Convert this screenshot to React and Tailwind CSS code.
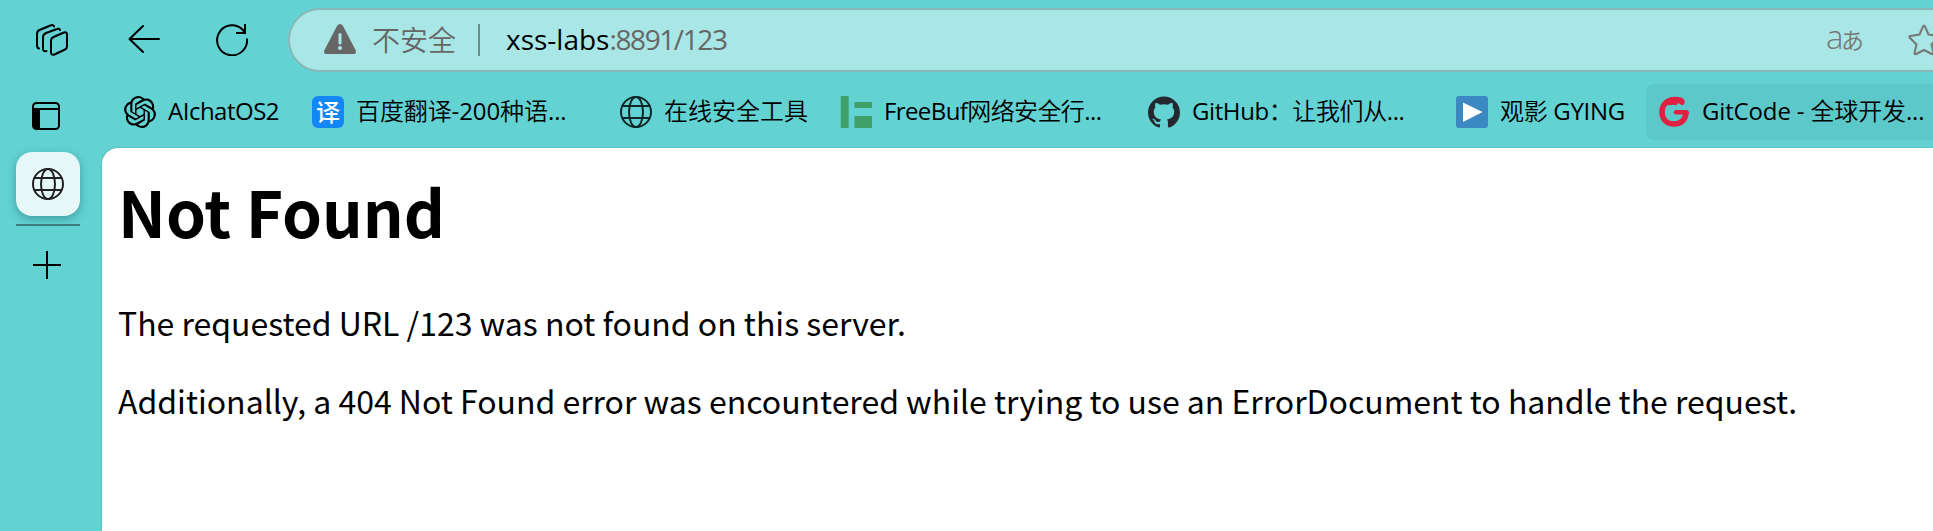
import React from "react";
import { SiOpenai, SiGithub } from "react-icons/si";

const UI = "font-['Open_Sans','Noto_Sans_CJK_SC',sans-serif]";

function Globe({ className }) {
  return (
    <svg className={className} width="32" height="32" viewBox="0 0 32 32" fill="none" stroke="currentColor" strokeWidth="2">
      <circle cx="16" cy="16" r="15" />
      <ellipse cx="16" cy="16" rx="7" ry="15" />
      <path d="M2 10h28M2 22h28" />
    </svg>
  );
}

function FreeBuf() {
  return (
    <svg width="32" height="32" viewBox="0 0 32 32" fill="#40a168">
      <path d="M.7 0h8v32h-8zM14.5 6H32v6H14.5zM14.5 20H32v12H14.5z" />
    </svg>
  );
}

function Play() {
  return (
    <svg width="32" height="32" viewBox="0 0 32 32">
      <rect width="32" height="32" rx="3" fill="#3b88c3" />
      <path d="M7 6.5 26.500 16 7 26z" fill="#fff" />
    </svg>
  );
}

function GitCode() {
  return (
    <svg width="32" height="32" viewBox="0 0 32 32" fill="none" stroke="#e11f41" strokeLinecap="round" strokeLinejoin="round">
      <path d="M23 4.500C13 1.500 4 6 4 16c0 7.500 5 12 12 12 6 0 10.500-3 12-10" strokeWidth="5.500" />
      <path d="M18 16.300H28.500" strokeWidth="4.500" />
      <path d="M6 12 8.300 7 11 9.500Q15 8 18 9.500L20 7l4.500 2.500Q28 7 26 3.500L15 1.500 6 5z" fill="#e11f41" stroke="none" />
    </svg>
  );
}

// Latin runs use the regular weight; Chinese runs keep the lighter inherited one.
function MixedText({ children }) {
  return children.split(/([\x20-\x7e]+)/).map((part, i) =>
    i % 2 ? <span key={i} className="font-normal">{part}</span> : part
  );
}

function Bookmark({ width, icon, label, text, active }) {
  return (
    <div className={`flex h-14 shrink-0 items-center gap-3 rounded-lg pl-3 ${width} ${active ? "bg-[#5dc8ca]" : ""}`}>
      <span className="flex size-8 shrink-0 items-center justify-center">{icon}</span>
      <span className={`whitespace-pre pb-0.5 text-2xl leading-8 ${text}`}><MixedText>{label}</MixedText></span>
    </div>
  );
}

export default function App() {
  return (
    <div className={`flex h-[531px] w-[1933px] flex-col overflow-hidden bg-[#62d2d3] font-[350] text-black ${UI}`}>
      <header className="flex h-20 shrink-0 items-center">
        <div className="flex w-72 shrink-0 items-center pl-9">
          <svg className="mr-[60px]" width="32" height="32" viewBox="0 0 32 32" fill="none" stroke="currentColor" strokeWidth="2" strokeLinejoin="round" strokeLinecap="round">
            <path d="M17.500 13 28 8.500Q31 7.500 31 10.500V22.500Q31 24.500 29 25.500L18.500 30.500Q15 31.500 15 28.500V17Q15 14 17.500 13z" />
            <path d="M24 6Q23.500 4 21 5L10 9Q7 10.500 7 13V25Q7 28 10.500 27" />
            <path d="M18 2.500Q17.500.5 15 1.300L3.500 6Q1 7 1 10V21.500Q1 24 3 24.500" />
          </svg>
          <svg className="mr-14" width="32" height="32" viewBox="0 0 32 32" fill="none" stroke="currentColor" strokeWidth="2" strokeLinecap="round" strokeLinejoin="round">
            <path d="M31 15H1.500M15 2 1.500 15 15 28" />
          </svg>
          <svg width="32" height="32" viewBox="0 0 32 32" fill="none" stroke="currentColor" strokeWidth="2">
            <path d="M31 14.500A15 15 0 1 1 26 5L29 8.500M29 0V9H20" />
          </svg>
        </div>
        <div className="flex h-16 w-[1700px] shrink-0 items-center rounded-full border-2 border-[#8ab8b8] bg-[#a8e7e5] pl-[34px] text-[28px] text-[#666]">
          <svg className="mr-4" width="32" height="32" viewBox="0 0 32 32">
            <path d="M13 2Q16-2 19 2L31.500 26Q33 30 29 30H3Q-1 30 .500 26z" fill="#666" />
            <path d="M16 10.500v8.500" stroke="#a8e7e5" strokeWidth="3" strokeLinecap="round" />
            <circle cx="16" cy="24" r="2" fill="#a8e7e5" />
          </svg>
          <span className="w-[84px] leading-9">不安全</span>
          <span className="ml-[22px] h-8 w-0.5 bg-[#6a8c8b]" />
          <span className="ml-[26px] w-[1320px] whitespace-nowrap pb-0.5 font-normal leading-9"><span className="text-black">xss-labs</span><span className="tracking-[-1.4px]">:8891/123</span></span>
          <span className="flex w-[82px] items-center text-[#777]">
            <span className="w-[15px] pb-1.5 text-[33px] leading-8">a</span>
            <span className="text-[23px] leading-8">あ</span>
          </span>
          <svg width="32" height="32" viewBox="0 0 32 32" fill="none" stroke="#777" strokeWidth="2" strokeLinejoin="round">
            <path d="M15 2.500Q16 .5 17 2.500L20.500 10.500 29.500 12Q31.500 12.500 30 14L23.500 20.500 25.500 29Q25.500 31 23.800 30L16 26 8.200 30Q6.500 31 6.500 29L8.500 20.500 2 14Q.500 12.500 2.500 12L11.500 10.500z" />
          </svg>
        </div>
      </header>

      <div className="flex min-h-0 grow">
        <aside className="flex w-[102px] shrink-0 flex-col pl-4 pt-[22px]">
          <svg className="ml-4" width="28" height="28" viewBox="0 0 28 28" fill="none" stroke="currentColor" strokeWidth="2">
            <rect x="1" y="1" width="26" height="26" rx="3.500" />
            <path d="M1 7h26" />
            <path d="M1 7h7v20H4q-3 0-3-3z" fill="currentColor" stroke="none" />
          </svg>
          <div className="mt-[22px] flex size-16 items-center justify-center rounded-2xl bg-[#e6f8f8] shadow-[0_3px_8px_rgba(0,60,60,0.35)]">
            <Globe className="text-[#222]" />
          </div>
          <div className="mt-2 h-0.5 w-16 bg-[#3b7e7f]" />
          <svg className="ml-[17px] mt-[25px]" width="28" height="28" viewBox="0 0 28 28" stroke="currentColor" strokeWidth="2">
            <path d="M14 0v28M0 14h28" />
          </svg>
        </aside>

        <div className="flex min-w-0 grow flex-col">
          <nav className="flex h-[68px] shrink-0 items-start pl-2.5 pt-1">
            <Bookmark width="w-[188px]" icon={<SiOpenai size={32} />} label="AIchatOS2" text="tracking-[-0.5px]" />
            <Bookmark width="w-[308px]" icon={<span className="flex size-8 items-center justify-center rounded-md bg-[#1487f7] text-2xl font-medium leading-8 text-white">译</span>} label="百度翻译-200种语..." text="tracking-[-0.1px]" />
            <Bookmark width="w-[220px]" icon={<Globe className="text-[#0d2626]" />} label="在线安全工具" text="" />
            <Bookmark width="w-[308px]" icon={<FreeBuf />} label="FreeBuf网络安全行..." text="tracking-[-0.6px]" />
            <Bookmark width="w-[308px]" icon={<SiGithub size={32} color="#24292f" />} label="GitHub：让我们从..." text="tracking-[-0.4px]" />
            <Bookmark width="w-[202px]" icon={<Play />} label="观影 GYING" text="tracking-[-0.3px]" />
            <Bookmark width="w-[310px]" icon={<GitCode />} label="GitCode - 全球开发..." text="tracking-[-0.15px]" active />
          </nav>
          <main className="grow rounded-tl-2xl bg-white pl-4 pt-4 font-['Noto_Sans_CJK_SC',sans-serif] font-normal shadow-[0_0_2px_rgba(0,0,0,0.25)]">
            <h1 className="whitespace-nowrap text-[64px] font-bold leading-[93px]">Not Found</h1>
            <p className="mt-[42px] whitespace-nowrap text-[32px] leading-[46px] tracking-[-0.01px]">The requested URL /123 was not found on this server.</p>
            <p className="mt-8 whitespace-nowrap text-[32px] leading-[46px] tracking-[-0.01px]">Additionally, a 404 Not Found error was encountered while trying to use an ErrorDocument to handle the request.</p>
          </main>
        </div>
      </div>
    </div>
  );
}
